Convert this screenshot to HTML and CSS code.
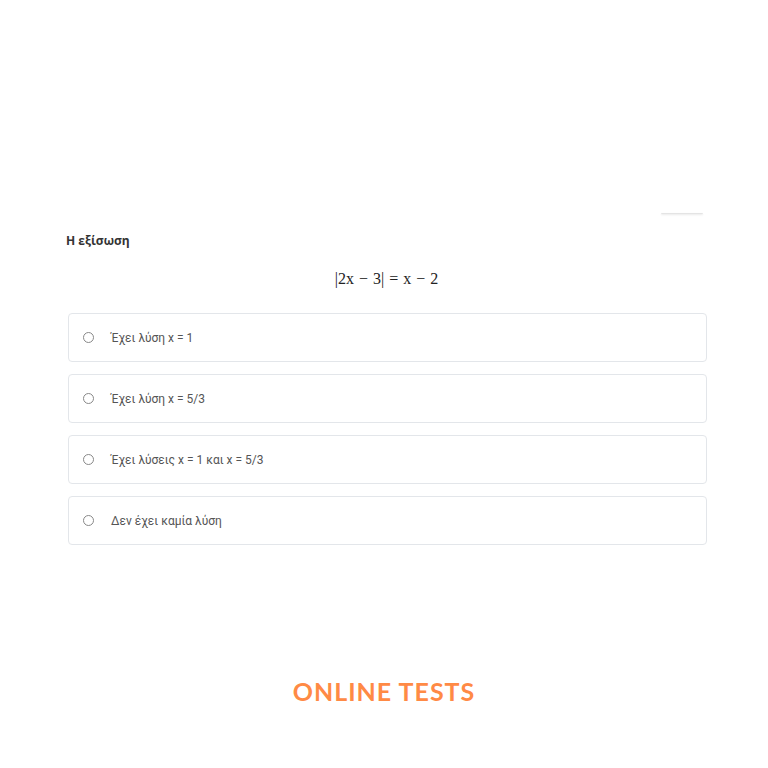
FILE: index.html
```html
<!DOCTYPE html>
<html lang="el">
<head>
    <meta charset="UTF-8">
    <title>Online Tests</title>
    <link rel="stylesheet" href="styles.css">
</head>
<body>

<main class="page">

    <div class="topbar">
        <span class="tab"></span>
    </div>

    <section class="question">
        <h4 class="title">Η εξίσωση</h4>
        <p class="formula">|2x &minus; 3| = x &minus; 2</p>

        <ul class="answers">
            <li><span class="radio"></span>Έχει λύση x = 1</li>
            <li><span class="radio"></span>Έχει λύση x = 5/3</li>
            <li><span class="radio"></span>Έχει λύσεις x = 1 και x = 5/3</li>
            <li><span class="radio"></span>Δεν έχει καμία λύση</li>
        </ul>
    </section>

    <footer class="brand">ONLINE TESTS</footer>

</main>

</body>
</html>
```

FILE: styles.css
```css
html, body {
    margin: 0;
    padding: 0;
    background: #fff;
}
ul, li {
    list-style: none;
    padding: 0;
    margin: 0;
}
.page {
    width: 768px;
    height: 768px;
    display: flex;
    flex-direction: column;
}

.topbar {
    height: 214px;
    display: flex;
    justify-content: flex-end;
    align-items: flex-end;
    padding-right: 65px;
}
.topbar .tab {
    width: 42px;
    height: 1px;
    background: #e4e4e4;
    box-shadow: 0 1px 2px rgba(0, 0, 0, 0.12);
    border-radius: 0 0 4px 4px;
}

.question {
    padding: 0 61px 0 66px;
}
.title {
    margin: 19px 0 0;
    font-family: "Open Sans", sans-serif;
    font-size: 12px;
    font-weight: 700;
    color: #333;
    line-height: 16px;
}
.formula {
    margin: 20px 0 0;
    text-align: center;
    font-family: "Liberation Serif", serif;
    font-size: 16px;
    color: #222;
    line-height: 20px;
    word-spacing: 1px;
}

.answers {
    margin: 24px 0 0 2px;
    display: flex;
    flex-direction: column;
    gap: 12px;
}
.answers li {
    height: 47px;
    border: 1px solid #e3e6ea;
    border-radius: 4px;
    display: flex;
    align-items: center;
    padding-left: 14px;
    font-family: Roboto, sans-serif;
    font-size: 12px;
    color: #555;
}
.radio {
    width: 9px;
    height: 9px;
    border: 1px solid #888;
    border-radius: 50%;
    margin-right: 17px;
}

.brand {
    margin-top: 131px;
    text-align: center;
    font-family: Lato, sans-serif;
    font-weight: 700;
    font-size: 25px;
    letter-spacing: 1px;
    color: #ff8a45;
}
```
